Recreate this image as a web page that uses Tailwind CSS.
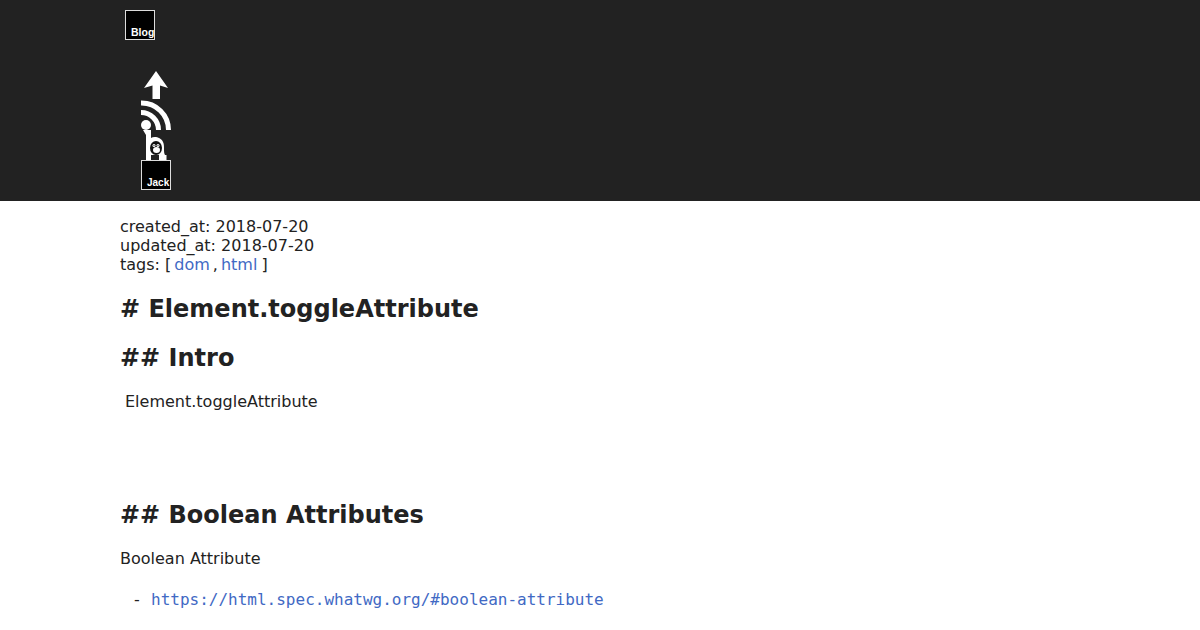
<!DOCTYPE html>
<html lang="en">
<head>
    <meta charset="UTF-8">
    <title>Element.toggleAttribute</title>
    <script src="https://cdn.jsdelivr.net/npm/@tailwindcss/browser@4"></script>
</head>
<body class="bg-white text-[#222222] font-['DejaVu_Sans',sans-serif] text-[16px] overflow-hidden h-[630px]">
    <header class="bg-[#222222] h-[201px] pt-[10px]">
        <div class="w-[960px] mx-auto pl-[5px]">
            <a href="#" class="block w-[30px] h-[30px] bg-black border border-[#dddddd] relative">
                <span class="absolute left-[5px] top-[15px] text-white text-[10.5px] leading-[12px] font-bold font-['Liberation_Sans',sans-serif]">Blog</span>
            </a>
            <ul class="mt-[30px] pl-[16px] w-[46px]">
                <li class="h-[30px]">
                    <svg class="block w-[30px] h-[30px]" viewBox="0 0 30 30"><path fill="#ffffff" d="M15 1 L27 18 L19 15.5 L19 29 L11.5 29 L11.5 15.5 L3 18 Z"/></svg>
                </li>
                <li class="h-[30px]">
                    <svg class="block w-[30px] h-[30px]" viewBox="0 0 30 30"><circle cx="5" cy="25" r="5" fill="#ffffff"/><path fill="none" stroke="#ffffff" stroke-width="5" d="M0 12.5 A17.5 17.5 0 0 1 17.5 30"/><path fill="none" stroke="#ffffff" stroke-width="5" d="M0 3 A27 27 0 0 1 27.5 30"/></svg>
                </li>
                <li class="h-[30px]">
                    <svg class="block w-[30px] h-[30px]" viewBox="0 0 30 30"><path fill="#ffffff" d="M2 0 H10 V8 C13 6 20 7 22 12 C24 16 22 22 24 25 H25.5 V30 H18 V25 H10 V30 H5 V5 Z"/><ellipse cx="15" cy="18" rx="6" ry="7" fill="#111111"/><ellipse cx="15.5" cy="20" rx="3.5" ry="3" fill="#ffffff"/><circle cx="13" cy="15.5" r="1.5" fill="#ffffff"/><circle cx="17" cy="15.5" r="1.5" fill="#ffffff"/><circle cx="13" cy="15.5" r="0.6" fill="#111111"/><circle cx="17" cy="15.5" r="0.6" fill="#111111"/></svg>
                </li>
                <li class="h-[30px]">
                    <a href="#" class="block w-[30px] h-[30px] bg-black border border-[#dddddd] relative">
                        <span class="absolute left-[5px] top-[16px] text-white text-[10px] leading-[12px] font-bold font-['Liberation_Sans',sans-serif]">Jack</span>
                    </a>
                </li>
            </ul>
        </div>
    </header>
    <main class="w-[960px] mx-auto">
        <dl class="pt-[16px] leading-[19px]">
            <div>created_at: 2018-07-20</div>
            <div>updated_at: 2018-07-20</div>
            <div class="flex">tags: [<a href="#" class="text-[#4169c4] ml-[3px]">dom</a><span class="ml-[3px]">,</span><a href="#" class="text-[#4169c4] ml-[3px]">html</a><span class="ml-[4px]">]</span></div>
        </dl>
        <h1 class="text-[24px] leading-[28px] font-bold mt-[21px]"># Element.toggleAttribute</h1>
        <h2 class="text-[24px] leading-[28px] font-bold mt-[21px]">## Intro</h2>
        <p class="leading-[19px] mt-[20px] pl-[5px]">Element.toggleAttribute</p>
        <h2 class="text-[24px] leading-[28px] font-bold mt-[90px]">## Boolean Attributes</h2>
        <p class="leading-[19px] mt-[20px]">Boolean Attribute</p>
        <ul class="mt-[22px] pl-[14px]">
            <li class="flex leading-[19px]"><span class="w-[17px]">-</span><a href="#" class="text-[#4169c4] font-['DejaVu_Sans_Mono',monospace]">https://html.spec.whatwg.org/#boolean-attribute</a></li>
        </ul>
    </main>
</body>
</html>
